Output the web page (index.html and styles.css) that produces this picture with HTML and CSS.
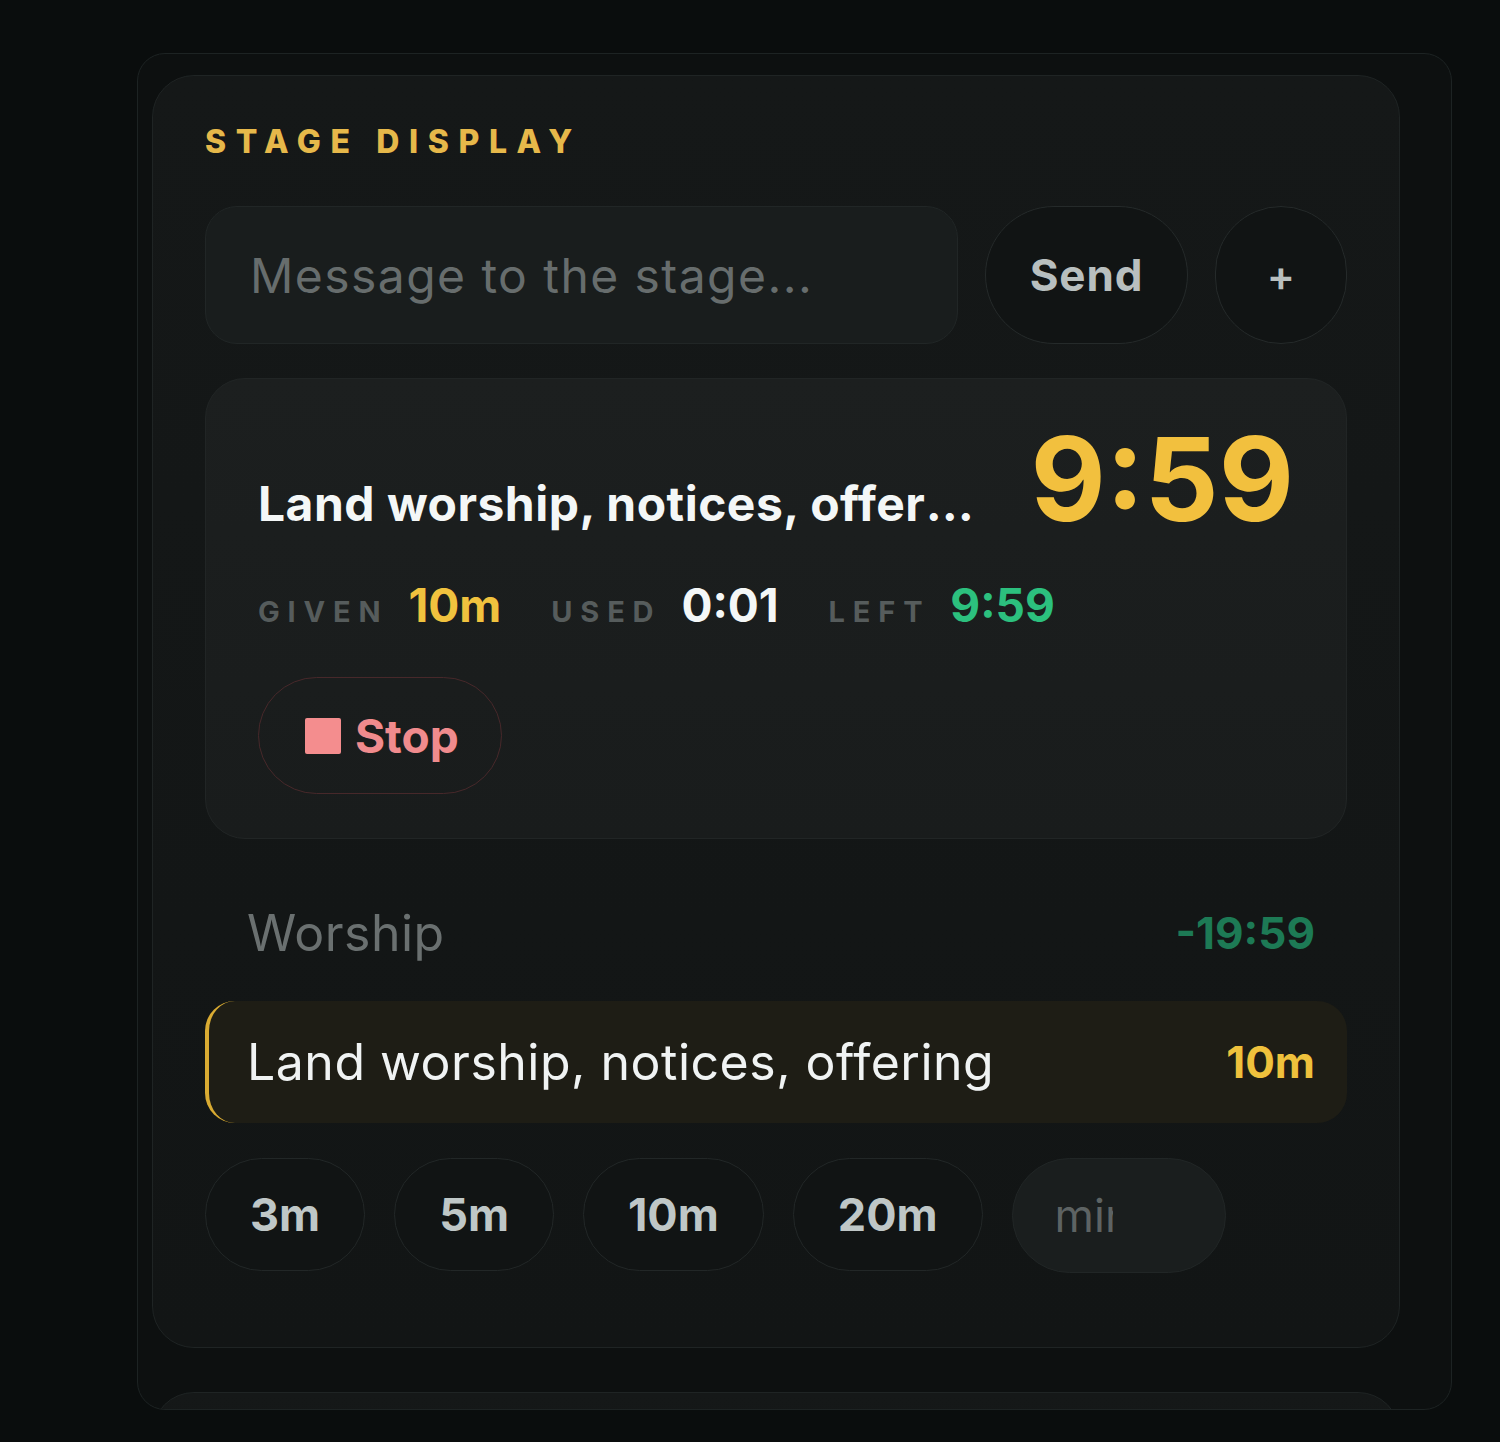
FILE: index.html
```html
<!DOCTYPE html>
<html lang="en">
<head>
    <meta charset="UTF-8">
    <meta name="viewport" content="width=device-width, initial-scale=1.0">
    <title>Stage Display</title>
    <link rel="stylesheet" href="styles.css">
</head>
<body>
    <div class="panel">
        <section class="card">
            <div class="card-label">STAGE DISPLAY</div>

            <!-- Message to the stage -->
            <div class="message-row">
                <input class="message-input" type="text" placeholder="Message to the stage...">
                <button class="pill-button send-button">Send</button>
                <button class="pill-button plus-button">+</button>
            </div>

            <!-- Current item -->
            <div class="now-card">
                <div class="now-head">
                    <div class="now-title">Land worship, notices, offering</div>
                    <div class="now-timer">9:59</div>
                </div>
                <div class="now-meta">
                    <div class="meta-group">
                        <span class="meta-label">GIVEN</span>
                        <span class="meta-value given">10m</span>
                    </div>
                    <div class="meta-group">
                        <span class="meta-label">USED</span>
                        <span class="meta-value used">0:01</span>
                    </div>
                    <div class="meta-group">
                        <span class="meta-label">LEFT</span>
                        <span class="meta-value left">9:59</span>
                    </div>
                </div>
                <button class="stop-button"><span class="stop-icon"></span>Stop</button>
            </div>

            <!-- Running order -->
            <div class="item-list">
                <div class="item">
                    <span class="item-name">Worship</span>
                    <span class="item-time overrun">-19:59</span>
                </div>
                <div class="item active">
                    <span class="item-name">Land worship, notices, offering</span>
                    <span class="item-time">10m</span>
                </div>
            </div>

            <div class="chip-row">
                <button class="chip">3m</button>
                <button class="chip">5m</button>
                <button class="chip">10m</button>
                <button class="chip">20m</button>
                <input class="chip-input" type="text" placeholder="min">
            </div>
        </section>

        <section class="card card-next"></section>
    </div>
</body>
</html>
```

FILE: styles.css
```css
body {
    margin: 0;
    padding: 53px 48px 0 137px;
    background-color: #0a0d0d;
    font-family: Inter, "Open Sans", sans-serif;
    color: #e8eded;
}
.panel {
    box-sizing: border-box;
    height: 1357px;
    overflow: hidden;
    padding: 21px 51px 0 14px;
    background-color: #0d1010;
    border: 1px solid #1d2323;
    border-radius: 28px;
}
.card {
    box-sizing: border-box;
    padding: 46px 52px 74px 52px;
    background: linear-gradient(180deg, #151818, #121515);
    border: 1px solid #1f2424;
    border-radius: 42px;
}
.card-next {
    margin-top: 44px;
    height: 200px;
    padding: 0;
}
.card-label {
    color: #e6b84a;
    font-size: 32px;
    font-weight: 800;
    letter-spacing: 0.3em;
    line-height: 40px;
}
.message-row {
    display: flex;
    gap: 27px;
    margin-top: 44px;
}
.message-input {
    flex: 1;
    min-width: 0;
    height: 138px;
    box-sizing: border-box;
    padding: 0 44px;
    background-color: #191d1d;
    border: 1px solid #212626;
    border-radius: 32px;
    font-family: inherit;
    font-size: 48px;
    letter-spacing: 0.03em;
    color: #e8eded;
    outline: none;
}
.message-input::placeholder {
    color: #676d6d;
}
.pill-button {
    height: 138px;
    box-sizing: border-box;
    background-color: #111414;
    border: 1px solid #252a2a;
    border-radius: 70px;
    font-family: inherit;
    font-weight: 700;
    color: #b8bfbf;
    cursor: pointer;
}
.send-button {
    width: 203px;
    font-size: 44px;
    letter-spacing: 0.02em;
}
.plus-button {
    width: 132px;
    font-size: 42px;
    font-weight: 600;
}
.now-card {
    margin-top: 34px;
    padding: 44px 52px 44px 52px;
    background: linear-gradient(180deg, #1c1f1f, #191c1c);
    border: 1px solid #212525;
    border-radius: 40px;
}
.now-head {
    display: flex;
    align-items: baseline;
    gap: 50px;
}
.now-title {
    flex: 1;
    min-width: 0;
    overflow: hidden;
    white-space: nowrap;
    text-overflow: ellipsis;
    font-size: 48px;
    font-weight: 700;
    letter-spacing: 0.01em;
    color: #f4f7f7;
}
.now-timer {
    font-size: 116px;
    font-weight: 700;
    line-height: 112px;
    color: #f2c03e;
}
.now-meta {
    display: flex;
    gap: 50px;
    margin-top: 42px;
}
.meta-group {
    display: flex;
    align-items: baseline;
    gap: 20px;
}
.meta-label {
    font-size: 29px;
    font-weight: 700;
    letter-spacing: 0.27em;
    color: #565c5c;
}
.meta-value {
    font-size: 46px;
    font-weight: 700;
}
.meta-value.given {
    color: #f0c23e;
}
.meta-value.used {
    color: #f4f7f7;
}
.meta-value.left {
    color: #2cc07e;
}
.stop-button {
    display: flex;
    align-items: center;
    gap: 14px;
    margin-top: 44px;
    height: 117px;
    padding: 0 42px 0 46px;
    background-color: transparent;
    border: 1px solid #47282a;
    border-radius: 60px;
    font-family: inherit;
    font-size: 46px;
    font-weight: 700;
    color: #f08b8d;
    cursor: pointer;
}
.stop-icon {
    width: 36px;
    height: 36px;
    border-radius: 2px;
    background-color: #f48d8e;
}
.item-list {
    display: flex;
    flex-direction: column;
    gap: 7px;
    margin-top: 33px;
}
.item {
    display: flex;
    align-items: center;
    justify-content: space-between;
    height: 122px;
    box-sizing: border-box;
    padding: 0 32px 0 42px;
    border-radius: 30px;
}
.item-name {
    font-size: 50px;
    color: #6a7070;
    letter-spacing: 0.01em;
}
.item-time {
    font-size: 44px;
    font-weight: 700;
    color: #efc13c;
}
.item-time.overrun {
    color: #1d7a55;
}
.item.active {
    background-color: #1e1d15;
    border-left: 4px solid #d9ab32;
    padding-left: 38px;
}
.item.active .item-name {
    color: #f0f3f3;
}
.chip-row {
    display: flex;
    gap: 29px;
    margin-top: 35px;
}
.chip {
    height: 113px;
    padding: 0 44px;
    background-color: #111414;
    border: 1px solid #222727;
    border-radius: 60px;
    font-family: inherit;
    font-size: 45px;
    font-weight: 700;
    color: #bfc7c7;
    cursor: pointer;
}
.chip-input {
    width: 58px;
    height: 113px;
    box-sizing: content-box;
    padding: 0 112px 0 42px;
    background-color: #1a1e1e;
    border: 1px solid #212626;
    border-radius: 60px;
    font-family: inherit;
    font-size: 45px;
    color: #e8eded;
    outline: none;
}
.chip-input::placeholder {
    color: #5d6363;
}
```
